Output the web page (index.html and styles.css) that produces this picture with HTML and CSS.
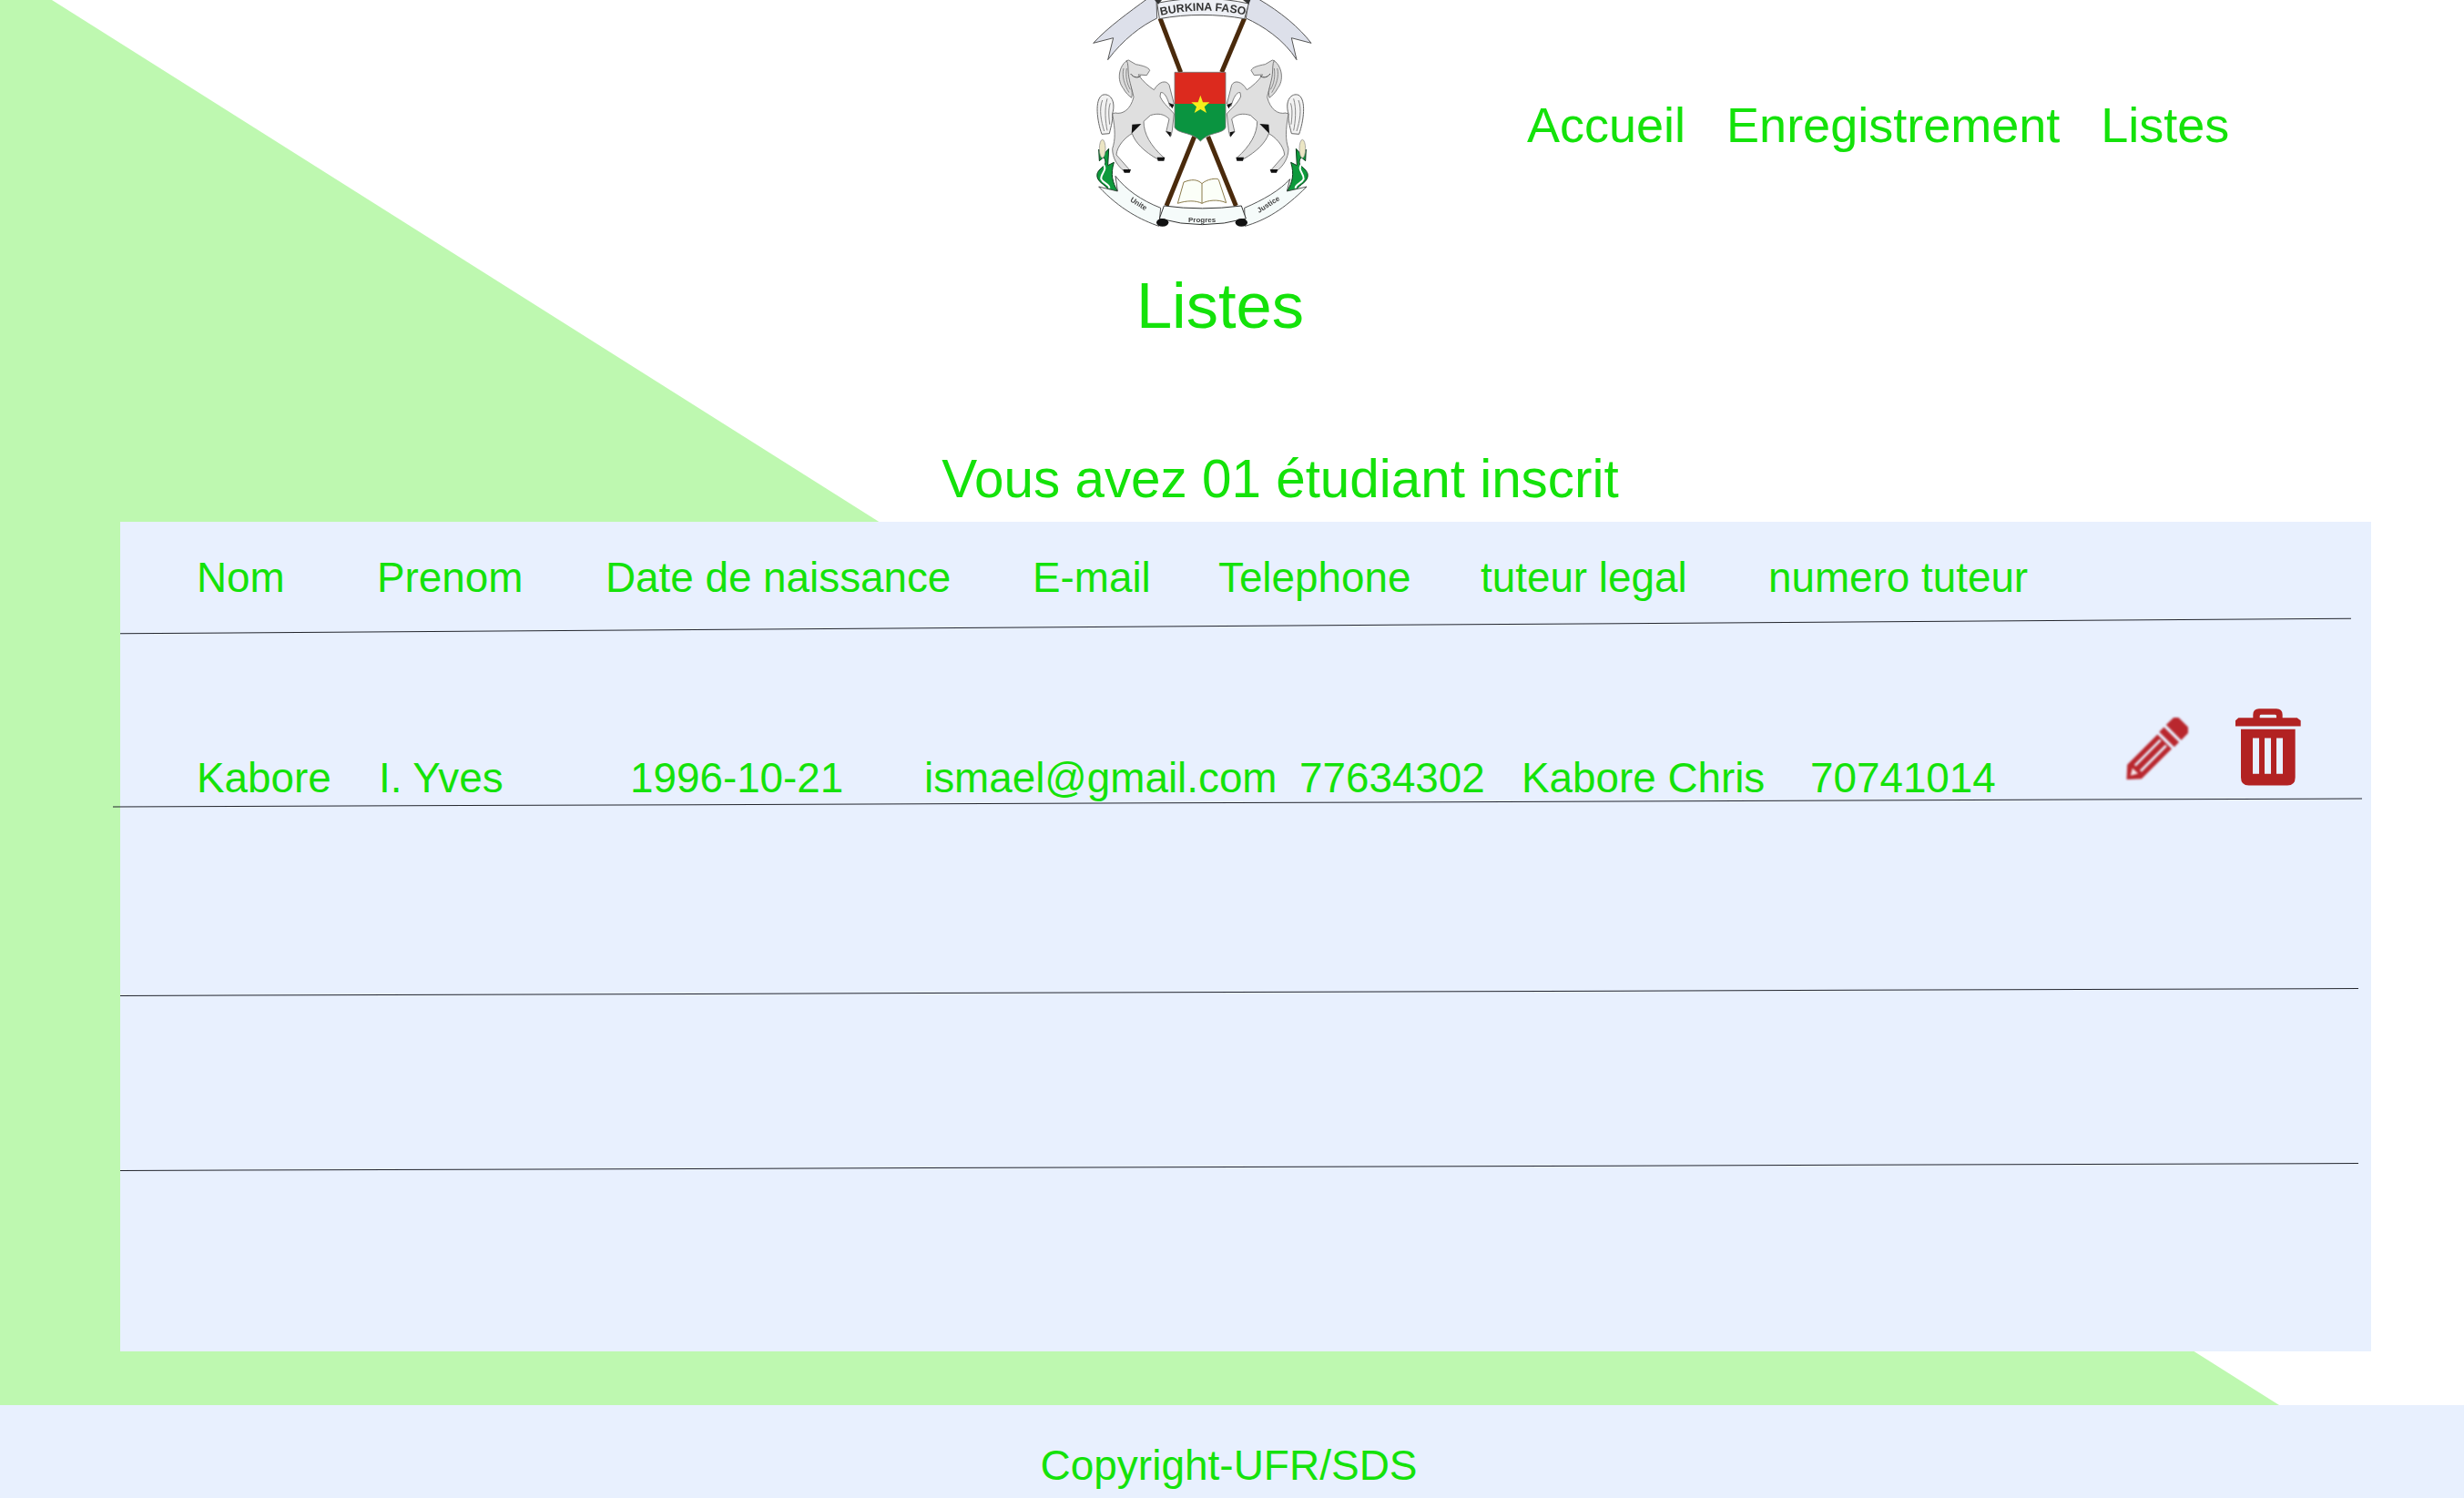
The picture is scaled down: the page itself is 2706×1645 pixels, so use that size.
FILE: index.html
```html
<!DOCTYPE html>
<html lang="fr">
<head>
<meta charset="utf-8">
<title>Listes</title>
<link rel="stylesheet" href="styles.css">
</head>
<body>
<div class="wedge"></div>
<header class="top">
  <svg class="emblem" viewBox="0 0 960 810" aria-label="Armoiries du Burkina Faso">
    <defs>
      <g id="horse">
        <path d="M215,375 C228,330 205,305 182,313 C155,328 165,400 180,442 L205,440 C212,410 216,400 215,375 Z" fill="#f2f2f2" stroke="#666" stroke-width="3"/>
        <path d="M182,330 C170,360 178,400 188,432 M198,325 C188,360 192,400 198,430 M208,340 C200,360 204,390 206,410" fill="none" stroke="#888" stroke-width="3"/>
        <path d="M268,198 L292,212 C315,216 335,222 338,232 L328,248 L300,246 C315,268 335,285 352,296 C368,268 392,262 402,280 L418,342 L404,350 C396,320 385,302 374,305 L372,318 C385,345 405,358 418,375 L412,430 L408,448 L392,435 L402,392 C385,375 365,372 340,380 L318,400 C318,440 340,480 385,520 L365,525 C320,500 290,470 280,440 C260,450 230,480 228,510 L272,560 L255,565 C230,545 215,520 215,490 C225,460 225,430 215,375 L224,372 C250,378 275,360 285,320 C280,285 255,250 262,200 Z" fill="#dfdfdf" stroke="#666" stroke-width="2.5"/>
        <path d="M262,200 C235,220 230,265 250,290 C258,305 268,315 278,322 C285,300 270,270 268,245 C266,225 268,210 262,200 Z" fill="#dcdcdc" stroke="#666" stroke-width="2.5"/>
        <path d="M252,225 C245,250 255,280 270,305 M262,225 C258,250 262,275 274,295" fill="none" stroke="#777" stroke-width="2.5"/>
        <path d="M275,243 C285,256 298,258 308,250" fill="none" stroke="#444" stroke-width="3"/>
        <path d="M278,440 L280,410 L310,408 Z" fill="#111"/>
        <path d="M400,338 L418,346 L412,358 Z M392,432 L408,436 L406,452 Z M362,518 L388,518 L385,530 L365,530 Z M250,558 L276,558 L272,569 L254,569 Z" fill="#111"/>
      </g>
      <g id="maize">
        <path d="M186,518 C205,545 172,550 165,572 C160,600 190,605 205,628 L232,630 C215,600 208,575 220,535 L200,545 L203,490 L185,510 L170,492 L172,530 Z" fill="#0e9a3c" stroke="#0a3a1a" stroke-width="3"/>
        <path d="M180,535 C205,560 175,570 178,590 C185,605 205,605 205,620" fill="none" stroke="#fff" stroke-width="6"/>
        <ellipse cx="182" cy="490" rx="10" ry="30" fill="#ece6c4" stroke="#888" stroke-width="2"/>
      </g>
      <path id="fasoArc" d="M372,52 Q510,19 655,50"/>
    </defs>
    <path d="M330,-4 C270,40 200,90 152,142 L218,125 L200,197 C250,130 310,85 362,60 L360,-4 Z" fill="#dde0ea" stroke="#555" stroke-width="3"/>
    <path d="M695,-4 C770,40 830,90 870,142 L805,125 L822,197 C780,130 710,85 655,60 L665,-4 Z" fill="#dde0ea" stroke="#555" stroke-width="3"/>
    <path d="M372,60 L440,238" stroke="#4a2a0c" stroke-width="15"/>
    <path d="M650,60 L575,238" stroke="#4a2a0c" stroke-width="15"/>
    <path d="M485,450 L393,678" stroke="#4a2a0c" stroke-width="15"/>
    <path d="M530,450 L622,678" stroke="#4a2a0c" stroke-width="15"/>
    <path d="M362,10 C460,-10 570,-10 664,12 L650,62 C560,45 460,45 370,62 Z" fill="#eef0f5" stroke="#555" stroke-width="3"/>
    <path d="M354,0 L378,0 L366,14 Z M645,0 L670,0 L664,14 Z" fill="#333"/>
    <text class="em-faso"><textPath href="#fasoArc" startOffset="50%" text-anchor="middle">BURKINA FASO</textPath></text>
    <use href="#horse"/>
    <use href="#horse" transform="translate(1010,0) scale(-1,1)"/>
    <use href="#maize"/>
    <use href="#maize" transform="translate(1023,0) scale(-1,1)"/>
    <path d="M420,238 H588 V342 H420 Z" fill="#dc2a1e"/>
    <path d="M420,342 H588 V420 Q585,432 550,440 Q520,448 505,465 Q490,448 460,440 Q425,432 420,420 Z" fill="#0a9440"/>
    <path d="M420,238 H588 V420 Q585,432 550,440 Q520,448 505,465 Q490,448 460,440 Q425,432 420,420 Z" fill="none" stroke="#777" stroke-width="2.5"/>
    <polygon points="505,314 513,337 535,337 518,352 525,372 505,360 485,372 492,352 475,337 497,337" fill="#f6ee1c"/>
    <path d="M430,670 L450,600 C475,590 495,590 510,605 C525,590 560,585 565,592 L590,668 C560,655 530,660 510,670 C490,660 460,660 430,670 Z" fill="#fbfff8" stroke="#8a7a4a" stroke-width="3"/>
    <path d="M510,605 V670" stroke="#8a7a4a" stroke-width="3"/>
    <path d="M170,615 C240,690 310,725 368,745 L374,685 C310,660 260,625 225,580 L232,630 Z" fill="#f5fbfa" stroke="#333" stroke-width="2.5"/>
    <path d="M855,615 C780,690 720,725 652,745 L650,685 C710,660 770,625 800,590 L790,630 Z" fill="#f5fbfa" stroke="#333" stroke-width="2.5"/>
    <path d="M385,678 Q510,695 640,678 L655,720 Q510,760 370,720 Z" fill="#f5fbfa" stroke="#333" stroke-width="3"/>
    <ellipse cx="380" cy="733" rx="20" ry="13" fill="#111"/>
    <ellipse cx="640" cy="733" rx="20" ry="13" fill="#111"/>
    <text class="em-small" transform="translate(272,662) rotate(32)">Unite</text>
    <text class="em-small" x="465" y="732">Progres</text>
    <text class="em-small" transform="translate(698,702) rotate(-32)">Justice</text>
  </svg>
  <nav class="nav">
    <a href="#">Accueil</a>
    <a href="#">Enregistrement</a>
    <a href="#">Listes</a>
  </nav>
</header>
<h1 class="title">Listes</h1>
<h2 class="count">Vous avez 01 étudiant inscrit</h2>
<main class="panel">
  <div class="row head">
    <span>Nom</span><span>Prenom</span><span>Date de naissance</span><span>E-mail</span><span>Telephone</span><span>tuteur legal</span><span>numero tuteur</span>
  </div>
  <hr class="rule rule-a">
  <div class="row data">
    <span>Kabore</span><span>I. Yves</span><span>1996-10-21</span><span>ismael@gmail.com</span><span>77634302</span><span>Kabore Chris</span><span>70741014</span>
    <span class="actions">
      <svg class="pencil" viewBox="165 115 200 203" aria-label="Modifier">
        <g transform="translate(165,318) rotate(-45)">
          <path d="M0,0 L36,-33 H176 V33 H36 Z" fill="#b9272e"/>
          <path d="M186,-35 H208 V35 H186 Z" fill="#b9272e"/>
          <path d="M218,-35 H246 Q264,-35 264,-18 V18 Q264,35 246,35 H218 Z" fill="#b9272e"/>
          <path d="M52,-13 H170 M52,13 H170" stroke="#e8f0fe" stroke-width="8"/>
          <path d="M18,0 L40,-13 V13 Z" fill="#f4e6ea"/>
        </g>
      </svg>
      <svg class="trash" viewBox="525 85 216 254" aria-label="Supprimer">
        <path d="M525,143 V124 L535,115 H583 V105 Q583,85 603,85 H660 Q680,85 680,105 V115 H728 L740,124 V143 Z M605,115 H660 V109 Q660,105 655,105 H610 Q605,105 605,109 Z" fill="#b22222" fill-rule="evenodd"/>
        <path d="M543,153 H722 V312 Q722,338 696,338 H569 Q543,338 543,312 Z M582,182 V300 H603 V182 Z M621,182 V300 H642 V182 Z M660,182 V300 H681 V182 Z" fill="#b22222" fill-rule="evenodd"/>
      </svg>
    </span>
  </div>
  <hr class="rule rule-b">
  <hr class="rule rule-c">
  <hr class="rule rule-d">
</main>
<footer class="foot">Copyright-UFR/SDS</footer>
</body>
</html>
```
FILE: styles.css
```css
html, body {
  margin: 0;
  padding: 0;
  background: #fff;
}
body {
  position: relative;
  height: 1645px;
  overflow: hidden;
  font-family: "Liberation Sans", Arial, sans-serif;
  color: #14e20a;
}
.wedge {
  position: absolute;
  left: 0;
  top: 0;
  width: 2503px;
  height: 1543px;
  background: #bef8b0;
  clip-path: polygon(0 0, 57px 0, 100% 100%, 0 100%);
}
.top {
  position: relative;
  display: flex;
  align-items: flex-start;
  height: 270px;
}
.emblem {
  display: block;
  width: 320px;
  height: 270px;
  margin-left: 1150px;
  filter: blur(0.4px);
}
.em-faso {
  font-family: "Liberation Sans", Arial, sans-serif;
  font-size: 37px;
  font-weight: 700;
  fill: #333;
}
.em-small {
  font-family: "Liberation Sans", Arial, sans-serif;
  font-size: 24px;
  font-weight: 700;
  fill: #444;
}
.nav {
  display: flex;
  gap: 45px;
  margin-left: 207px;
  margin-top: 107px;
  font-size: 54px;
  line-height: 60px;
}
.nav a {
  color: inherit;
  text-decoration: none;
}
.title {
  position: relative;
  margin: 26px 0 0;
  padding-right: 26px;
  text-align: center;
  font-size: 70.5px;
  font-weight: 400;
  line-height: 80px;
}
.count {
  position: relative;
  margin: 116px 0 0;
  padding-left: 106px;
  text-align: center;
  font-size: 58.4px;
  font-weight: 400;
  line-height: 67px;
  height: 81px;
}
.panel {
  position: relative;
  box-sizing: border-box;
  width: 2472px;
  height: 911px;
  margin-left: 132px;
  padding-top: 37px;
  background: #e8f0fe;
  font-size: 45.8px;
  line-height: 50px;
}
.row {
  display: grid;
  align-items: end;
  padding-left: 84px;
  white-space: nowrap;
}
.head {
  grid-template-columns: 198px 251px 469px 204px 288px 316px auto;
}
.data {
  grid-template-columns: 200px 276px 323px 412px 244px 317px 347px auto;
  margin-top: 90px;
}
.actions {
  display: flex;
  align-items: flex-end;
  gap: 52px;
  margin-bottom: 17px;
}
.pencil {
  display: block;
  width: 68px;
  height: 68px;
  margin-bottom: 7px;
  filter: blur(1px);
}
.trash {
  display: block;
  width: 72px;
  height: 85px;
}
.rule {
  height: 1px;
  margin: 0;
  border: 0;
  background: #23262e;
}
.rule-a {
  width: 2450px;
  margin-top: 27px;
  transform: rotate(-0.386deg);
}
.rule-b {
  width: 2470px;
  margin-top: 1px;
  margin-left: -8px;
  transform: rotate(-0.209deg);
}
.rule-c {
  width: 2458px;
  margin-top: 207px;
  transform: rotate(-0.186deg);
}
.rule-d {
  width: 2458px;
  margin-top: 191px;
  transform: rotate(-0.186deg);
}
.foot {
  position: relative;
  box-sizing: border-box;
  height: 102px;
  margin-top: 59px;
  padding: 41px 7px 0 0;
  background: #e8f0fe;
  text-align: center;
  font-size: 46px;
  line-height: 50px;
}
```
